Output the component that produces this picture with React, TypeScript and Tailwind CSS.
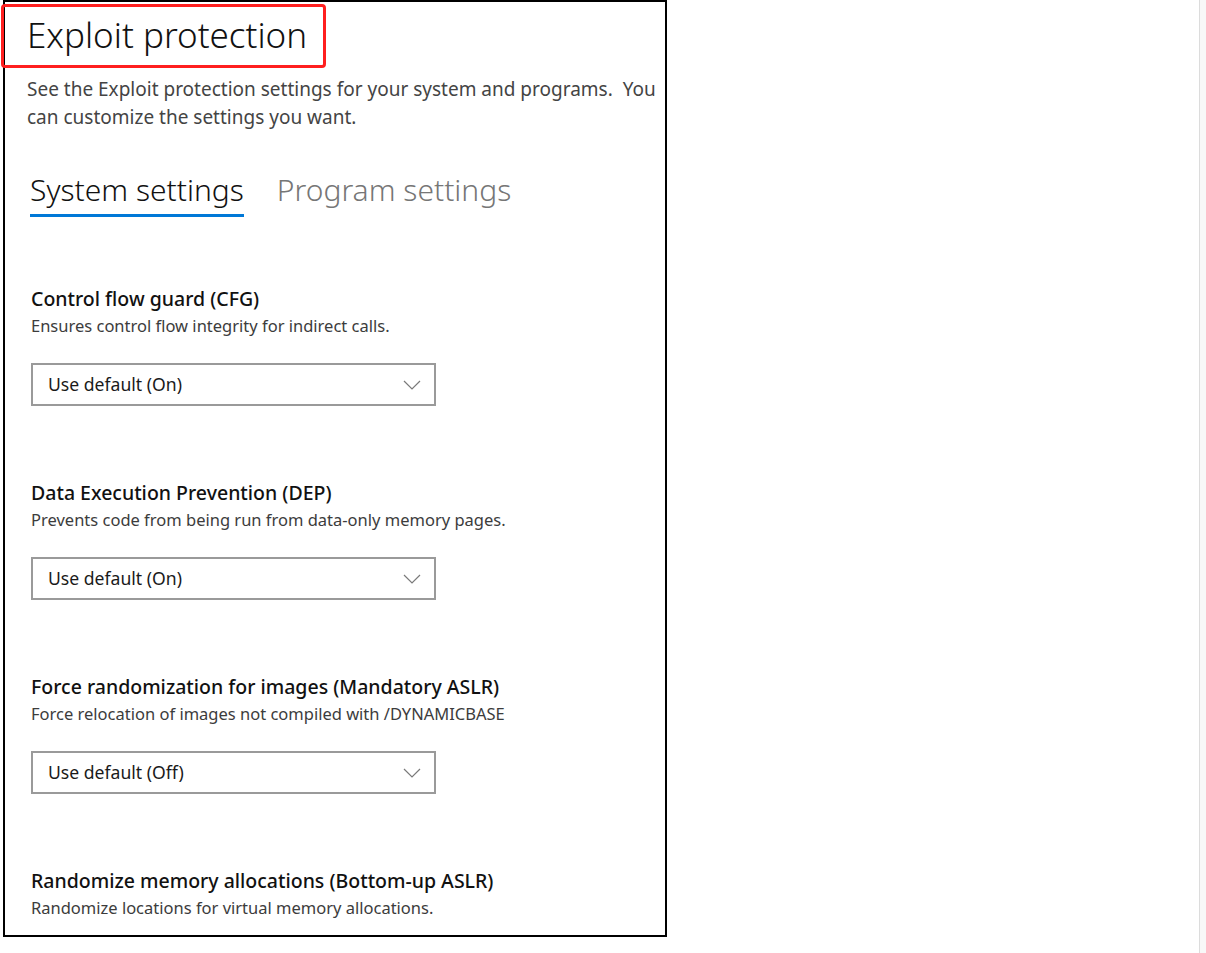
const sections = [
  {
    title: "Control flow guard (CFG)",
    desc: "Ensures control flow integrity for indirect calls.",
    value: "Use default (On)",
  },
  {
    title: "Data Execution Prevention (DEP)",
    desc: "Prevents code from being run from data-only memory pages.",
    value: "Use default (On)",
  },
  {
    title: "Force randomization for images (Mandatory ASLR)",
    desc: "Force relocation of images not compiled with /DYNAMICBASE",
    value: "Use default (Off)",
  },
  {
    title: "Randomize memory allocations (Bottom-up ASLR)",
    desc: "Randomize locations for virtual memory allocations.",
    value: null,
  },
];

function Chevron() {
  return (
    <svg width="18" height="10" viewBox="0 0 18 10" className="shrink-0">
      <path d="M1 1 L9 9 L17 1" fill="none" stroke="#7a7a7a" strokeWidth="1.2" />
    </svg>
  );
}

function Dropdown({ value }: { value: string }) {
  return (
    <div className="mt-[27px] w-[405px] h-[43px] border-2 border-[#9a9a9a] flex items-center justify-between pl-[15px] pr-[13px]">
      <span className="text-[17.6px] text-[#1a1a1a]">{value}</span>
      <Chevron />
    </div>
  );
}

export default function App() {
  return (
    <div className="w-full h-[953px] bg-white flex font-['Noto_Sans',sans-serif] overflow-hidden">
      <div className="relative ml-[3px] w-[664px] h-[937px] border-2 border-black shrink-0 pl-[22px] pt-[11px]">
        <div className="absolute left-[-4px] top-[2px] w-[325px] h-[64px] border-[3px] border-[#ff1f1f] rounded-[4px]" />

        <h1 className="text-[35px] leading-[44px] font-light text-[#111]">Exploit protection</h1>
        <p className="mt-[18px] text-[19px] leading-[28px] text-[#444]">
          See the Exploit protection settings for your system and programs.&nbsp; You can customize the settings you
          want.
        </p>

        <div className="mt-[39px] flex items-start gap-[33px] pl-[3px]">
          <div className="flex flex-col">
            <span className="text-[30px] leading-[40px] font-light text-[#111]">System settings</span>
            <div className="mt-[4px] h-[3px] bg-[#0078d7]" />
          </div>
          <span className="text-[30px] leading-[40px] font-light text-[#767676]">Program settings</span>
        </div>

        <div className="pl-[4px]">
          {sections.map((s, i) => (
            <div key={s.title} className={i === 0 ? "mt-[70px]" : "mt-[75px]"}>
              <h2 className="text-[19.5px] leading-[24px] font-medium text-[#111]">{s.title}</h2>
              <p className="mt-[5px] text-[16.5px] leading-[20px] text-[#3c3c3c]">{s.desc}</p>
              {s.value && <Dropdown value={s.value} />}
            </div>
          ))}
        </div>
      </div>
      <div className="flex-1" />
      <div className="w-[7px] h-full border-l border-[#dcdcdc] bg-[#f8f8f8]" />
    </div>
  );
}
